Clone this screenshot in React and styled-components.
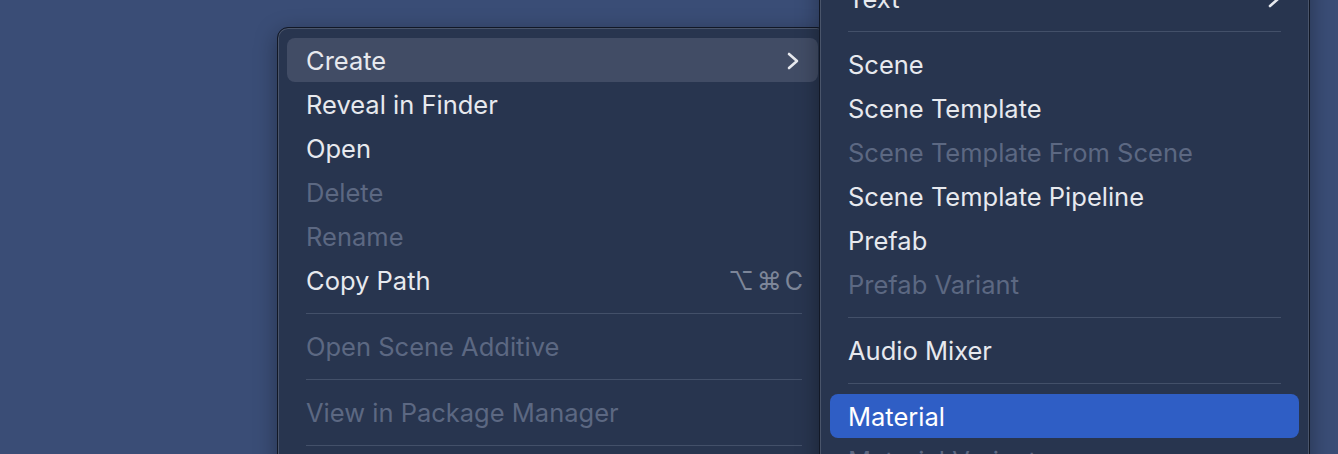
import React from 'react';
import styled, {createGlobalStyle} from 'styled-components';

const GlobalStyle = createGlobalStyle`
    html, body {
        margin: 0;
        padding: 0;
        background: #3a4d76;
        overflow: hidden;
    }
    body {
        font-family: Inter, "Liberation Sans", "DejaVu Sans", sans-serif;
        -webkit-font-smoothing: antialiased;
    }
`;

const Desktop = styled.div`
    position: relative;
    width: 1338px;
    height: 454px;
    overflow: hidden;
    background: #3a4d76;
`;

// floating context menus: placed over the desktop
const Menu = styled.div`
    position: absolute;
    left: ${props => props.$left}px;
    top: ${props => props.$top}px;
    width: ${props => props.$width}px;
    box-sizing: border-box;
    display: flex;
    flex-direction: column;
    padding: 10px ${props => props.$side || 9}px;
    background: #28354f;
    border: 1px solid #121826;
    border-radius: 11px;
    box-shadow: inset 0 0 0 1px rgba(255, 255, 255, 0.16), 0 6px 22px rgba(0, 0, 0, 0.35);
    z-index: ${props => props.$layer};
`;

const Row = styled.div`
    display: flex;
    align-items: center;
    justify-content: space-between;
    box-sizing: border-box;
    height: 44px;
    flex-shrink: 0;
    padding: 1px 15px 0 ${props => props.$indent || 18}px;
    border-radius: 8px;
    font-size: 25.5px;
    color: ${props => props.$disabled ? '#5c6882' : '#e7e9ee'};
    background: ${props => props.$state === 'open' ? '#414c65' : props.$state === 'selected' ? '#2f5ec5' : 'transparent'};
    ${props => props.$state === 'selected' && 'color: #ffffff;'}
    svg {
        margin-right: 3px;
    }
`;

const Separator = styled.div`
    height: 22px;
    flex-shrink: 0;
    display: flex;
    align-items: center;
    padding: 0 ${props => props.$right || 18}px 0 ${props => props.$indent || 18}px;
    &::after {
        content: '';
        flex: 1;
        height: 1px;
        background: #435069;
    }
`;

const Shortcut = styled.span`
    color: #7d8699;
    font-size: 25px;
    font-family: Inter, "DejaVu Sans", sans-serif;
    letter-spacing: 3px;
    margin-right: -3px;
`;

const Chevron = () => (
    <svg width="14" height="20" viewBox="0 0 14 20">
        <path d="M3 3 L11 10 L3 17" fill="none" stroke="#e7e9ee" strokeWidth="2.6" strokeLinecap="round" strokeLinejoin="round" />
    </svg>
);

const mainItems = [
    {label: 'Create', state: 'open', sub: true},
    {label: 'Reveal in Finder'},
    {label: 'Open'},
    {label: 'Delete', disabled: true},
    {label: 'Rename', disabled: true},
    {label: 'Copy Path', shortcut: '⌥⌘C'},
    {sep: true},
    {label: 'Open Scene Additive', disabled: true},
    {sep: true},
    {label: 'View in Package Manager', disabled: true},
    {sep: true},
];

const createItems = [
    {label: 'Text', sub: true},
    {sep: true},
    {label: 'Scene'},
    {label: 'Scene Template'},
    {label: 'Scene Template From Scene', disabled: true},
    {label: 'Scene Template Pipeline'},
    {label: 'Prefab'},
    {label: 'Prefab Variant', disabled: true},
    {sep: true},
    {label: 'Audio Mixer'},
    {sep: true},
    {label: 'Material', state: 'selected'},
    {label: 'Material Variant', disabled: true},
];

const renderItems = (items, indent, right) => items.map((item, index) => (
    item.sep
        ? <Separator key={index} $indent={indent} $right={right} />
        : <Row key={index} $indent={indent} $disabled={item.disabled} $state={item.state}>
            <span>{item.label}</span>
            {item.sub && <Chevron />}
            {item.shortcut && <Shortcut>{item.shortcut}</Shortcut>}
        </Row>
));

const App = () => (
    <Desktop>
        <GlobalStyle />
        <Menu $left={277} $top={27} $width={551} $layer={1}>
            {renderItems(mainItems, 19, 16)}
        </Menu>
        <Menu $left={819} $top={-35} $width={491} $side={10} $layer={2}>
            {renderItems(createItems, 18, 18)}
        </Menu>
    </Desktop>
);

export default App;
